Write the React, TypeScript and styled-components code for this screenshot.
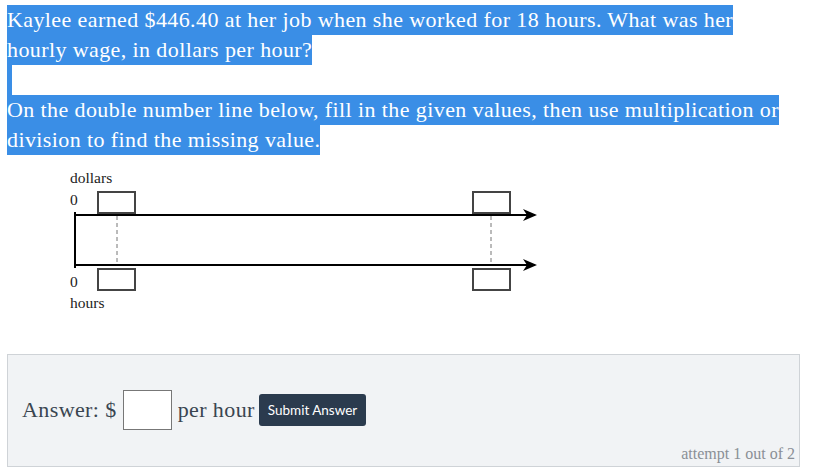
import React from 'react';
import styled, { createGlobalStyle } from 'styled-components';

const serif = '"Liberation Serif", "DejaVu Serif", serif';
const sans = 'Lato, "Open Sans", sans-serif';

const GlobalStyle = createGlobalStyle`
  body {
    margin: 0;
    background: #ffffff;
    font-family: ${serif};
  }
`;

const Page = styled.div`
  padding: 5px 0 0 7px;
  width: 793px;
`;

const Prompt = styled.div`
  font-family: ${serif};
  font-size: 22px;
  letter-spacing: 0.4px;
  line-height: 30px;
  color: #ffffff;
`;

const Line = styled.div`
  height: 30px;
  white-space: nowrap;
`;

const Sel = styled.span<{ blank?: boolean }>`
  background: #3a8ee6;
  display: inline-block;
  height: 30px;
  width: ${({ blank }) => (blank ? '5px' : 'auto')};
`;

const Diagram = styled.div`
  margin-top: 5px;
  margin-left: 41px;
  height: 194px;
`;

const Panel = styled.div`
  height: 111px;
  border: 1px solid #cfd3d7;
  background: #f1f3f5;
  display: flex;
  flex-direction: column;
  font-family: ${serif};
`;

const AnswerRow = styled.div`
  display: flex;
  align-items: center;
  padding: 35px 0 0 14px;
  font-size: 22px;
  letter-spacing: 0.4px;
  color: #3a4550;
`;

const Blank = styled.div`
  width: 47px;
  height: 38px;
  margin: 0 6px 0 6px;
  border: 1px solid #777;
  background: #ffffff;
`;

const SubmitButton = styled.button`
  margin-left: 4px;
  height: 32px;
  padding: 0 9px;
  border: none;
  border-radius: 3px;
  background: #2b3b4e;
  color: #ffffff;
  font-family: ${sans};
  font-size: 13.5px;
  letter-spacing: 0;
`;

const Attempt = styled.div`
  margin-top: auto;
  align-self: flex-end;
  padding: 0 4px 3px 0;
  font-size: 16px;
  color: #8a8f96;
`;

const NumberLine = () => (
  <svg width="500" height="194" viewBox="0 0 500 194">
    <defs>
      <marker id="arrow" markerWidth="14" markerHeight="12" refX="12" refY="6" orient="auto" markerUnits="userSpaceOnUse">
        <path d="M0 0 L14 6 L0 12 L4 6 Z" fill="#000" />
      </marker>
    </defs>
    <g fontFamily={'"Liberation Serif", serif'} fontSize="15.5" fill="#222">
      <text x="22" y="23">dollars</text>
      <text x="22" y="45">0</text>
      <text x="22" y="127">0</text>
      <text x="22" y="148">hours</text>
    </g>
    <line x1="27" y1="52" x2="27" y2="108" stroke="#000" strokeWidth="2" />
    <line x1="27" y1="55" x2="487" y2="55" stroke="#000" strokeWidth="2" markerEnd="url(#arrow)" />
    <line x1="27" y1="105" x2="487" y2="105" stroke="#000" strokeWidth="2" markerEnd="url(#arrow)" />
    <line x1="69" y1="56" x2="69" y2="105" stroke="#777" strokeWidth="1" strokeDasharray="4 3" />
    <line x1="443" y1="56" x2="443" y2="105" stroke="#777" strokeWidth="1" strokeDasharray="4 3" />
    <g fill="#fff" stroke="#444" strokeWidth="2">
      <rect x="50" y="32" width="37" height="21" />
      <rect x="425" y="32" width="37" height="21" />
      <rect x="50" y="109" width="37" height="21" />
      <rect x="425" y="109" width="37" height="21" />
    </g>
  </svg>
);

export default function App() {
  return (
    <Page>
      <GlobalStyle />
      <Prompt>
        <Line>
          <Sel>Kaylee earned $446.40 at her job when she worked for 18 hours. What was her</Sel>
        </Line>
        <Line>
          <Sel>hourly wage, in dollars per hour?</Sel>
        </Line>
        <Line>
          <Sel blank />
        </Line>
        <Line>
          <Sel>On the double number line below, fill in the given values, then use multiplication or</Sel>
        </Line>
        <Line>
          <Sel>division to find the missing value.</Sel>
        </Line>
      </Prompt>
      <Diagram>
        <NumberLine />
      </Diagram>
      <Panel>
        <AnswerRow>
          Answer: $<Blank />per hour
          <SubmitButton type="button">Submit Answer</SubmitButton>
        </AnswerRow>
        <Attempt>attempt 1 out of 2</Attempt>
      </Panel>
    </Page>
  );
}
